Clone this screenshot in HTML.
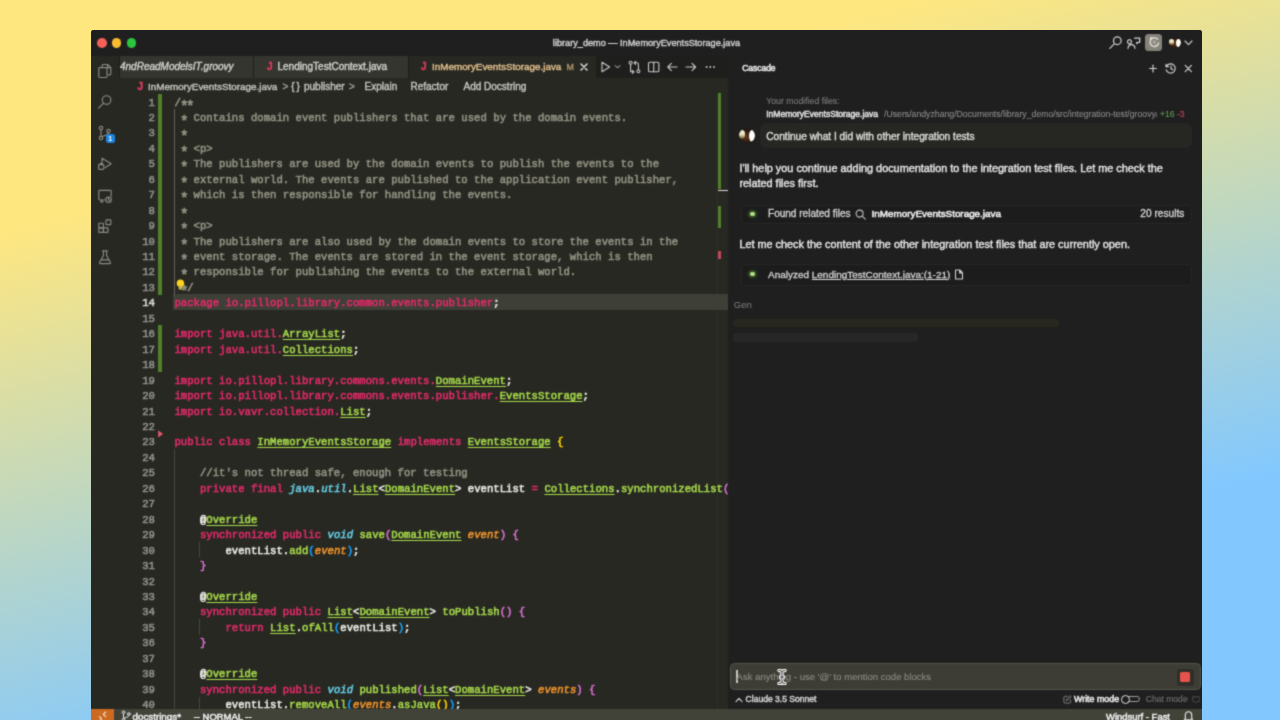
<!DOCTYPE html>
<html lang="en">
<head>
<meta charset="utf-8">
<title>library_demo — InMemoryEventsStorage.java</title>
<style>
*{box-sizing:border-box;margin:0;padding:0}
html,body{width:1280px;height:720px;overflow:hidden}
body{position:relative;background:linear-gradient(165.8deg,#FFE77F 22%,#82C8FF 76.5%);font-family:"Liberation Sans",sans-serif;color:#ccc;-webkit-font-smoothing:antialiased}
.abs{position:absolute}
#win{position:absolute;left:91px;top:30px;width:1111px;height:700px;background:#1f1f1f;border-radius:3px 3px 0 0;overflow:hidden;filter:url(#soft)}
/* all children of #win are positioned in window coords (page x-91, page y-30) */
#titlebar{position:absolute;left:0;top:0;width:1111px;height:26px;background:#1f1f1f}
.tl{position:absolute;top:7.9px;width:9.7px;height:9.7px;border-radius:50%}
#title{position:absolute;left:0;width:1111px;top:6.5px;text-align:center;font-size:9.17px;line-height:13px;color:#cfcfcf;-webkit-text-stroke:0.4px}
#activity{position:absolute;left:0;top:26px;width:28px;height:653px;background:#272822}
#tabs{position:absolute;left:28px;top:26px;width:609px;height:21.5px;background:#1e1f1c}
.tab{position:absolute;top:0;height:21.5px;background:#34352f;font-size:10px;line-height:22px;color:#d0d0cc;white-space:nowrap;-webkit-text-stroke:0.4px}
#editor{position:absolute;left:28px;top:47.5px;width:609px;height:631.5px;background:#272822;overflow:hidden}
#cascade{position:absolute;left:637px;top:26px;width:474px;height:653px;background:#1f1f1f;overflow:hidden}
#status{position:absolute;left:0;top:679px;width:1111px;height:21px;background:#414339;font-size:9.3px;color:#fff}

/* editor */
#bc{position:absolute;left:0;top:0;width:609px;height:16px;font-size:10px;line-height:17.5px;color:#c4c4bf;white-space:nowrap;-webkit-text-stroke:0.4px}
#bc span{position:absolute;top:0}
.jicon{color:#dc3c5e;font-weight:bold;font-family:"Liberation Sans",sans-serif}
#code{position:absolute;z-index:0;left:0;top:16px;width:609px;font-family:"Liberation Mono",monospace;font-size:10.64px;line-height:15.465px;color:#ecece6;font-weight:normal;-webkit-text-stroke:0.55px}
.ln{position:relative;height:15.465px;line-height:18.1px;padding-left:55.45px;white-space:pre;overflow:hidden}
.ln b{position:absolute;left:0;top:0;width:36px;text-align:right;color:#90908a;font-weight:normal}
.ln.cur{background:linear-gradient(90deg,transparent 54.5px,#3e3f36 54.5px)}
.ln.cur b{color:#d8d8d2}
.c{color:#929283}.k{color:#e22a6a}.t{color:#a6d94a;text-decoration:underline;text-underline-offset:1.5px;text-decoration-thickness:1px}
.f{color:#a6d94a}.i{color:#66d0e8;font-style:italic}.p{color:#f0942c;font-style:italic}
.a{display:inline-block;width:6.385px;transform:translateY(3.7px) scale(1.35)}
.b1{color:#ffd700}.b2{color:#da70d6}.b3{color:#179fff}
.gbar{position:absolute;left:39.2px;width:3.5px;background:#52802a}
.guide{position:absolute;width:1px;background:#464741}

/* tabs */
.tab i{font-style:italic}
.tab .jicon{position:absolute;top:0}
.tab .nm{position:absolute;top:0}
.tabact{position:absolute;top:0;height:21.5px}
.ico{position:absolute;fill:none;stroke:#c8c8c8;stroke-width:1.1;stroke-linecap:round;stroke-linejoin:round}
.aico{position:absolute;left:6px;fill:none;stroke:#8a8a85;stroke-width:1.15;stroke-linecap:round;stroke-linejoin:round}

/* cascade */
#cascade{font-size:10px;color:#d6d6d6;white-space:nowrap;-webkit-text-stroke:0.3px}
#cascade .tx{position:absolute;white-space:nowrap}
.main{font-size:10.87px;line-height:15px;color:#e4e4e4;-webkit-text-stroke:0.42px}
.row{position:absolute;left:13px;width:451px;height:19px;border:1px solid #262626;border-radius:4px;background:#1c1c1c}
.dot{position:absolute;left:8px;top:5.6px;width:4.6px;height:4.6px;border-radius:50%;background:#b4dc8c;box-shadow:0 0 2.5px 1.6px rgba(80,140,45,.6)}
.sk{position:absolute;left:5px;height:8px;border-radius:2px}

/* status */
#status .st{position:absolute;top:0.5px;line-height:13px;font-size:9.45px;white-space:nowrap;color:#f0f0f0;-webkit-text-stroke:0.5px}

.av{position:absolute;border-radius:50%;overflow:hidden;background:radial-gradient(ellipse at 46% 58%,#54301a 0 14%,#2a1b13 45%,#171310 100%)}
.av i{position:absolute;border-radius:50%}
.av .l{left:3%;top:12%;width:38%;height:62%;background:linear-gradient(180deg,#efe8cc 0 45%,#b8ab78 70%,rgba(110,100,55,.6) 100%)}
.av .r{right:2%;top:12%;width:38%;height:80%;background:radial-gradient(ellipse at 50% 45%,#fffffa 0 50%,#ece6d6 80%,rgba(210,200,180,.7) 100%)}
</style>
</head>
<body>
<svg width="0" height="0" style="position:absolute" aria-hidden="true"><defs>
<filter id="soft" x="0" y="0" width="100%" height="100%" color-interpolation-filters="sRGB">
<feConvolveMatrix order="3" divisor="1" edgeMode="duplicate" preserveAlpha="true" kernelMatrix="0.0311 0.1141 0.0311 0.1141 0.4191 0.1141 0.0311 0.1141 0.0311"/>
</filter></defs></svg>
<div id="win">
  <div id="titlebar">
    <div class="tl" style="left:6.1px;background:#f6605a"></div>
    <div class="tl" style="left:20.8px;background:#f9bc30"></div>
    <div class="tl" style="left:35.7px;background:#2bc540"></div>
    <div id="title">library_demo — InMemoryEventsStorage.java</div>
    <svg class="ico" style="left:1016px;top:4px;stroke:#cfcfcf;stroke-width:1.25" width="90" height="18" viewBox="0 0 90 18">
      <circle cx="10.3" cy="6.700" r="3.800"/><path d="M7.500 9.600l-4.700 4.800"/>
      <path d="M24.500 7.800a2 2 0 1 1 0-.1M21 14.300c.3-2.700 1.500-3.800 3.500-3.800s3.200 1.100 3.500 3.800M27.500 4h5.200v4.300h-1.700l-1.200 1.400v-1.400"/>
    </svg>
    <div class="abs" style="left:1054px;top:3.700px;width:17px;height:17px;border-radius:3.500px;background:#85837a"></div>
    <svg class="ico" style="left:1055.500px;top:5.200px;stroke:#dcdad2;stroke-width:1.500" width="14" height="14" viewBox="0 0 14 14"><path d="M10.600 4.300a4.300 4.300 0 1 0 1 3.700M4.500 2.500l-1.300 1.300"/><circle cx="7.300" cy="7" r="1.800" fill="#a9a79e" stroke="none"/></svg>
    <div class="av" style="left:1077.4px;top:7.4px;width:13px;height:10.8px"><i class="l"></i><i class="r"></i></div>
    <svg class="ico" style="left:1093px;top:10px;stroke:#c8c8c8;stroke-width:1.200" width="9" height="6" viewBox="0 0 9 6"><path d="M1 1l3.500 3.600 3.500-3.600"/></svg>
  </div>
  <div id="activity">
    <svg class="aico" style="top:6.5px" width="16" height="16" viewBox="0 0 16 16"><path d="M5.2 3.6V2.4a.9.9 0 0 1 .9-.9h4.6l3.1 3.1v6.3a.9.9 0 0 1-.9.9h-1.6"/><path d="M10.5 1.6v3h3.2"/><rect x="1.8" y="4.6" width="8.2" height="9.9" rx=".9"/></svg>
    <svg class="aico" style="top:38px" width="16" height="16" viewBox="0 0 16 16"><circle cx="9.6" cy="6" r="4.3"/><path d="M6.5 9.2L1.6 14.2"/></svg>
    <svg class="aico" style="top:69px" width="16" height="16" viewBox="0 0 16 16"><circle cx="4" cy="3" r="1.7"/><circle cx="4" cy="13" r="1.7"/><circle cx="11.5" cy="6" r="1.7"/><path d="M4 4.7v6.6M11.5 7.7c0 2.6-3.2 2.4-6.3 4"/></svg>
    <div class="abs" style="left:14.7px;top:78px;width:9px;height:9px;border-radius:2.5px;background:#1a85e0;color:#fff;font-size:7px;line-height:9px;text-align:center;font-weight:bold">1</div>
    <svg class="aico" style="top:100px" width="16" height="16" viewBox="0 0 16 16"><path d="M5 2.2l9.2 5.6-6.2 4M5 2.2v5.3"/><rect x="1.6" y="8.6" width="5.2" height="4.8" rx=".8"/><path d="M3 8.6V7.5h2.4v1.1"/></svg>
    <svg class="aico" style="top:131.5px" width="16" height="16" viewBox="0 0 16 16"><path d="M8 12H2.7a.9.9 0 0 1-.9-.9V3.2a.9.9 0 0 1 .9-.9h10.6a.9.9 0 0 1 .9.9v5"/><path d="M4.6 12v1.6M3.6 13.8h2.6"/><circle cx="11.6" cy="11.8" r="2.7"/><path d="M11.6 10.4v1.6l1 .6"/></svg>
    <svg class="aico" style="top:161.5px" width="16" height="16" viewBox="0 0 16 16"><rect x="1.8" y="5.2" width="4.6" height="4.6" rx=".5"/><rect x="1.8" y="9.8" width="4.6" height="4.6" rx=".5"/><rect x="6.4" y="9.8" width="4.6" height="4.6" rx=".5"/><rect x="9" y="1.8" width="4.8" height="4.8" rx=".7"/></svg>
    <svg class="aico" style="top:193px" width="16" height="16" viewBox="0 0 16 16"><path d="M5.6 1.8h4.8M6.4 1.8v4.6L2.6 13.4a.8.8 0 0 0 .7 1.2h9.4a.8.8 0 0 0 .7-1.2L9.6 6.4V1.8M4.2 10.8h7.6"/></svg>
  </div>
  <div id="tabs">
    <div class="tab" style="left:0.5px;width:133.5px;overflow:hidden"><span class="nm" style="left:0.5px;font-style:italic">4ndReadModelsIT.groovy</span></div>
    <div class="tab" style="left:135px;width:153.5px"><span class="jicon" style="left:13px">J</span><span class="nm" style="left:23.5px">LendingTestContext.java</span></div>
    <div class="tab" style="left:289.5px;width:187px;background:#272822;color:#e2c08d"><span class="jicon" style="left:12.5px">J</span><span class="nm" style="left:23.5px;font-size:9.87px">InMemoryEventsStorage.java</span><span class="nm" style="left:158px;font-size:8.800px;color:#ad9468">M</span><svg class="ico" style="left:171px;top:6.5px;stroke:#e6e6e6;stroke-width:1.4" width="8" height="8" viewBox="0 0 8 8"><path d="M1 1l6 6M7 1l-6 6"/></svg></div>
    <svg class="ico" style="left:481px;top:4px" width="118" height="14" viewBox="0 0 118 14">
      <path d="M2 2.2v9.6l7.6-4.8z"/>
      <path d="M15.3 5.6l2.3 2.4 2.3-2.4" stroke-width="1"/>
      <circle cx="30.6" cy="2.8" r="1.5"/><circle cx="38.4" cy="11.2" r="1.5"/>
      <path d="M30.6 4.3v7.5M38.4 9.7v-5.2a1.7 1.7 0 0 0-1.7-1.7h-2.6M35.6 1.3l-1.6 1.5 1.6 1.5M30.6 11.8h3.2M32.4 10.3l1.6 1.5-1.6 1.5"/>
      <rect x="48.5" y="2.2" width="10.4" height="9.6" rx="1.3"/><path d="M53.7 2.2v9.6"/>
      <path d="M77 7h-9.2M71.4 3.4l-3.6 3.6 3.6 3.6"/>
      <path d="M86 7h9.6M92 3.4l3.6 3.6-3.6 3.6"/>
      <g fill="#c8c8c8" stroke="none"><circle cx="110.3" cy="7" r="0.95"/><circle cx="114" cy="7" r="0.95"/><circle cx="106.600" cy="7" r="0.95"/></g>
    </svg>
  </div>
  <div id="editor">
    <div id="bc">
      <span class="jicon" style="left:18.5px">J</span>
      <span style="left:29px;font-size:9.87px">InMemoryEventsStorage.java</span>
      <span style="left:163.5px;color:#a0a09a">&gt;</span>
      <span style="left:172px;letter-spacing:2px;font-size:10.5px">{}</span>
      <span style="left:185px">publisher</span>
      <span style="left:230px;color:#a0a09a">&gt;</span>
      <span style="left:245.5px">Explain</span>
      <span style="left:291.5px">Refactor</span>
      <span style="left:344.5px">Add Docstring</span>
    </div>
    <div id="code">
<div class="ln"><b>1</b><span class="c">/<span class="a">*</span><span class="a">*</span></span></div>
<div class="ln"><b>2</b><span class="c"> <span class="a">*</span> Contains domain event publishers that are used by the domain events.</span></div>
<div class="ln"><b>3</b><span class="c"> <span class="a">*</span></span></div>
<div class="ln"><b>4</b><span class="c"> <span class="a">*</span> &lt;p&gt;</span></div>
<div class="ln"><b>5</b><span class="c"> <span class="a">*</span> The publishers are used by the domain events to publish the events to the</span></div>
<div class="ln"><b>6</b><span class="c"> <span class="a">*</span> external world. The events are published to the application event publisher,</span></div>
<div class="ln"><b>7</b><span class="c"> <span class="a">*</span> which is then responsible for handling the events.</span></div>
<div class="ln"><b>8</b><span class="c"> <span class="a">*</span></span></div>
<div class="ln"><b>9</b><span class="c"> <span class="a">*</span> &lt;p&gt;</span></div>
<div class="ln"><b>10</b><span class="c"> <span class="a">*</span> The publishers are also used by the domain events to store the events in the</span></div>
<div class="ln"><b>11</b><span class="c"> <span class="a">*</span> event storage. The events are stored in the event storage, which is then</span></div>
<div class="ln"><b>12</b><span class="c"> <span class="a">*</span> responsible for publishing the events to the external world.</span></div>
<div class="ln"><b>13</b><span class="c"> <span class="a">*</span>/</span></div>
<div class="ln cur"><b>14</b><span class="k">package io.pillopl.library.common.events.publisher</span>;</div>
<div class="ln"><b>15</b></div>
<div class="ln"><b>16</b><span class="k">import java.util.</span><span class="t">ArrayList</span>;</div>
<div class="ln"><b>17</b><span class="k">import java.util.</span><span class="t">Collections</span>;</div>
<div class="ln"><b>18</b></div>
<div class="ln"><b>19</b><span class="k">import io.pillopl.library.commons.events.</span><span class="t">DomainEvent</span>;</div>
<div class="ln"><b>20</b><span class="k">import io.pillopl.library.commons.events.publisher.</span><span class="t">EventsStorage</span>;</div>
<div class="ln"><b>21</b><span class="k">import io.vavr.collection.</span><span class="t">List</span>;</div>
<div class="ln"><b>22</b></div>
<div class="ln"><b>23</b><span class="k">public class</span> <span class="t">InMemoryEventsStorage</span> <span class="k">implements</span> <span class="t">EventsStorage</span> <span class="b1">{</span></div>
<div class="ln"><b>24</b></div>
<div class="ln"><b>25</b><span class="c">    //it's not thread safe, enough for testing</span></div>
<div class="ln"><b>26</b>    <span class="k">private final</span> <span class="i">java</span>.<span class="i">util</span>.<span class="t">List</span>&lt;<span class="t">DomainEvent</span>&gt; eventList <span class="k">=</span> <span class="t">Collections</span>.<span class="f">synchronizedList</span><span class="b2">(</span><span class="k">new</span> <span class="t">ArrayList</span>&lt;&gt;<span class="b3">()</span><span class="b2">)</span>;</div>
<div class="ln"><b>27</b></div>
<div class="ln"><b>28</b>    @<span class="t">Override</span></div>
<div class="ln"><b>29</b>    <span class="k">synchronized public</span> <span class="i">void</span> <span class="f">save</span><span class="b2">(</span><span class="t">DomainEvent</span> <span class="p">event</span><span class="b2">)</span> <span class="b2">{</span></div>
<div class="ln"><b>30</b>        eventList.<span class="f">add</span><span class="b3">(</span><span class="p">event</span><span class="b3">)</span>;</div>
<div class="ln"><b>31</b>    <span class="b2">}</span></div>
<div class="ln"><b>32</b></div>
<div class="ln"><b>33</b>    @<span class="t">Override</span></div>
<div class="ln"><b>34</b>    <span class="k">synchronized public</span> <span class="t">List</span>&lt;<span class="t">DomainEvent</span>&gt; <span class="f">toPublish</span><span class="b2">()</span> <span class="b2">{</span></div>
<div class="ln"><b>35</b>        <span class="k">return</span> <span class="t">List</span>.<span class="f">ofAll</span><span class="b3">(</span>eventList<span class="b3">)</span>;</div>
<div class="ln"><b>36</b>    <span class="b2">}</span></div>
<div class="ln"><b>37</b></div>
<div class="ln"><b>38</b>    @<span class="t">Override</span></div>
<div class="ln"><b>39</b>    <span class="k">synchronized public</span> <span class="i">void</span> <span class="f">published</span><span class="b2">(</span><span class="t">List</span>&lt;<span class="t">DomainEvent</span>&gt; <span class="p">events</span><span class="b2">)</span> <span class="b2">{</span></div>
<div class="ln"><b>40</b>        eventList.<span class="f">removeAll</span><span class="b3">(</span><span class="p">events</span>.<span class="f">asJava</span><span class="b1">()</span><span class="b3">)</span>;</div>
<div class="ln"><b>41</b>    <span class="b2">}</span></div>
<div class="abs" style="left:597.5px;top:0;width:1.2px;height:632px;background:#2e2f29;z-index:-1"></div>
<div class="abs" style="left:598.5px;top:-0.2px;width:3.6px;height:95.7px;background:#52802a"></div>
<div class="abs" style="left:598.5px;top:96px;width:10.5px;height:1.6px;background:#d8d8d8"></div>
<div class="abs" style="left:598.5px;top:112px;width:3.6px;height:22.3px;background:#52802a"></div>
<div class="abs" style="left:598.5px;top:157.2px;width:3.8px;height:8.2px;background:#c04a58"></div>
<svg class="abs" style="left:57px;top:185.28px" width="9" height="12" viewBox="0 0 9 12"><circle cx="4.400" cy="4.200" r="3.700" fill="#ffd21e"/><path d="M2.600 6.800h3.600v2.900a.9.900 0 0 1-.9.900h-1.800a.9.900 0 0 1-.9-.9z" fill="#c8b44a"/></svg>
<svg class="abs" style="left:39px;top:336.23px" width="6" height="8" viewBox="0 0 6 8"><path d="M.2.300l4.800 3.600-4.800 3.600z" fill="#e0586e"/></svg>
<div class="gbar" style="top:0;height:201.04px"></div>
<div class="gbar" style="top:231.97px;height:46.39px"></div>
<div class="guide" style="left:54.9px;top:15.46px;height:185.58px;background:#62635c;width:1.5px"></div>
<div class="guide" style="left:54.9px;top:355.69px;height:280px"></div>
<div class="guide" style="left:80.4px;top:448.49px;height:15.465px"></div>
<div class="guide" style="left:80.4px;top:525.81px;height:15.465px"></div>
<div class="guide" style="left:80.4px;top:603.13px;height:15.465px"></div>
    </div>
  </div>
  <div id="cascade"><div id="cin" style="position:absolute;left:0;top:-26px;width:474px;height:679px">
    <div class="tx" style="left:14.2px;top:32px;font-size:8.46px;line-height:12px;color:#e2e2e2;-webkit-text-stroke:0.6px">Cascade</div>
    <svg class="ico" style="left:419px;top:32px;stroke:#d0d0d0;stroke-width:1.2" width="50" height="13" viewBox="0 0 50 13">
      <path d="M6 3.1v6.800M2.600 6.500h6.800"/>
      <path d="M19.6 4.2a4.6 4.6 0 1 1-.4 3.6M19 2.4v2.3h2.3M24 4v2.7l1.8 1"/>
      <path d="M38.2 3.4l6.200 6.200M44.400 3.400l-6.200 6.200"/>
    </svg>
    <div class="tx" style="left:38.2px;top:64.5px;font-size:8.74px;line-height:12px;color:#777;-webkit-text-stroke:0.15px">Your modified files:</div>
    <div class="tx" style="left:38.2px;top:77.5px;font-size:8.54px;line-height:12px;color:#e0e0e0;-webkit-text-stroke:0.5px">InMemoryEventsStorage.java</div>
    <div class="tx" style="left:156px;top:77.5px;width:272.5px;overflow:hidden;font-size:8.71px;line-height:12px;color:#8a8a8a;-webkit-text-stroke:0.1px">/Users/andyzhang/Documents/library_demo/src/integration-test/groovy/io/pillopl/library</div>
    <div class="tx" style="left:432px;top:77.5px;font-size:8.6px;line-height:12px;color:#5f9e55;-webkit-text-stroke:0.1px">+16</div>
    <div class="tx" style="left:449px;top:77.5px;font-size:8.6px;line-height:12px;color:#c2445c;-webkit-text-stroke:0.1px">-3</div>
    <div class="abs" style="left:31.7px;top:93.4px;width:432.3px;height:24.4px;border-radius:6px;background:#262622"></div>
    <div class="tx" style="left:38.2px;top:99.5px;font-size:10.17px;line-height:13px;color:#dcdcdc;-webkit-text-stroke:0.4px">Continue what I did with other integration tests</div>
    <div class="av" style="left:10.9px;top:98.4px;width:16px;height:14.6px"><i class="l"></i><i class="r"></i></div>
    <div class="tx main" style="left:11.4px;top:130.7px">I'll help you continue adding documentation to the integration test files. Let me check the<br>related files first.</div>
    <div class="row" style="top:175px"><div class="dot"></div>
      <div class="tx" style="left:26px;top:1.2px;line-height:13px;font-size:10.04px">Found related files</div>
      <svg class="ico" style="left:112.5px;top:3px;stroke:#c0c0c0" width="11" height="11" viewBox="0 0 11 11"><circle cx="4.6" cy="4.6" r="3.5"/><path d="M7.2 7.2l3 3"/></svg>
      <div class="tx" style="left:129.6px;top:1px;line-height:13px;font-size:9.87px;color:#f0f0f0;-webkit-text-stroke:0.55px">InMemoryEventsStorage.java</div>
      <div class="tx" style="left:398.3px;top:1.2px;line-height:13px;font-size:10.17px">20 results</div>
    </div>
    <div class="tx main" style="left:11.4px;top:206.7px">Let me check the content of the other integration test files that are currently open.</div>
    <div class="row" style="top:234px;height:21.6px"><div class="dot" style="top:6.8px"></div>
      <div class="tx" style="left:26px;top:2.6px;line-height:13px;font-size:9.97px">Analyzed <span style="text-decoration:underline;text-underline-offset:1px">LendingTestContext.java:(1-21)</span></div>
      <svg class="ico" style="left:212px;top:3.8px;stroke:#d0d0d0" width="10" height="11" viewBox="0 0 10 11"><path d="M1.5 1h4.3l2.7 2.7v6.3h-7zM5.6 1.2v2.7h2.7"/></svg>
    </div>
    <div class="tx" style="left:5.8px;top:268px;font-size:9.52px;line-height:13px;color:#7a7a7a;-webkit-text-stroke:0.1px">Gen</div>
    <div class="sk" style="top:289px;width:325.7px;background:#27271f"></div>
    <div class="sk" style="top:303px;width:185px;background:#272727;height:8.5px"></div>
    <div class="abs" style="left:1.6px;top:633.2px;width:471px;height:27.2px;border-radius:4.5px;background:#3d3d35;border:1px solid #55554c"></div>
    <div class="abs" style="left:8px;top:640px;width:1.6px;height:13px;background:#c6c6be"></div>
    <div class="tx" style="left:8.6px;top:640.1px;font-size:9.54px;line-height:13px;color:#8c8c84;-webkit-text-stroke:0.1px">Ask anything - use '@' to mention code blocks</div>
    <svg class="abs" style="left:48.5px;top:639px" width="10" height="16" viewBox="0 0 10 16"><path d="M2 1.5c1.6 0 3 .4 3 1.6 0-1.2 1.4-1.6 3-1.6M2 14.500c1.600 0 3-.4 3-1.6 0 1.200 1.400 1.600 3 1.600M5 3.100v9.800M3.300 8h3.400" fill="none" stroke="#fff" stroke-width="3.3" stroke-linecap="round"/><path d="M2 1.500c1.600 0 3 .4 3 1.600 0-1.200 1.400-1.600 3-1.600M2 14.500c1.600 0 3-.4 3-1.600 0 1.200 1.400 1.600 3 1.600M5 3.100v9.800M3.300 8h3.400" fill="none" stroke="#222" stroke-width="0.9" stroke-linecap="round"/></svg>
    <div class="abs" style="left:448.5px;top:638.5px;width:17.5px;height:17.5px;border-radius:3px;background:#2f2f29"></div>
    <div class="abs" style="left:452.3px;top:642px;width:10px;height:10px;border-radius:1.5px;background:#e8524c"></div>
    <svg class="ico" style="left:7.3px;top:666.5px;stroke:#c8c8c8;stroke-width:1.2" width="8" height="6" viewBox="0 0 8 6"><path d="M1 4.6l3-3.200 3 3.200"/></svg>
    <div class="tx" style="left:17.600px;top:663px;font-size:8.56px;line-height:12px;color:#d4d4d4;-webkit-text-stroke:0.45px">Claude 3.5 Sonnet</div>
    <svg class="ico" style="left:334.500px;top:665px;stroke:#7c7c7c;stroke-width:1.100" width="9" height="9" viewBox="0 0 10 10"><path d="M4.500 1.500h-2.500a1 1 0 0 0-1 1v5.500a1 1 0 0 0 1 1h5.500a1 1 0 0 0 1-1v-2.500M8 1l1 1-4 4-1.400.4.400-1.400z"/></svg>
    <div class="tx" style="left:346px;top:663px;font-size:8.85px;line-height:12px;color:#f0f0f0;-webkit-text-stroke:0.5px">Write mode</div>
    <div class="abs" style="left:398px;top:666.3px;width:14.3px;height:6px;border-radius:3px;border:1px solid #9a9a9a"></div>
    <div class="abs" style="left:392.800px;top:664.500px;width:9.600px;height:9.600px;border-radius:50%;border:1.500px solid #e4e4e4;background:#1f1f1f"></div>
    <div class="tx" style="left:417.700px;top:663px;font-size:8.59px;line-height:12px;color:#6e6e6e;-webkit-text-stroke:0.150px">Chat mode</div>
    <svg class="ico" style="left:463.800px;top:666.200px;stroke:#505050;stroke-width:1.100" width="8.500" height="7.650" viewBox="0 0 10 9"><path d="M1.500 1h7a.8.800 0 0 1 .8.800v3.900a.8.800 0 0 1-.8.800h-2.500l-1.500 1.700-1.500-1.700h-1.500a.8.800 0 0 1-.8-.8v-3.900a.8.800 0 0 1 .8-.8z"/></svg>
  </div></div>
  <div id="status">
    <div class="abs" style="left:0;top:0;width:22.500px;height:21px;background:#cc6a22"></div>
    <svg class="ico" style="left:5.500px;top:1.5px;stroke:#f4e6d8;stroke-width:1.100" width="11" height="11" viewBox="0 0 11 11"><path d="M2.400 5.600l2.300 2.300-2.300 2.300M8.600 1l-2.300 2.300 2.300 2.300"/></svg>
    <svg class="ico" style="left:29.500px;top:0.5px;stroke:#e8e8e8;stroke-width:1" width="10" height="12" viewBox="0 0 10 12"><circle cx="2.500" cy="2.200" r="1.300"/><circle cx="2.500" cy="9.800" r="1.300"/><circle cx="7.800" cy="4" r="1.300"/><path d="M2.500 3.500v5M7.800 5.300c0 2-2.600 1.800-5 3"/></svg>
    <div class="st" style="left:41.500px;font-size:9.8px">docstrings*</div>
    <div class="st" style="left:102.700px">-- NORMAL --</div>
    <div class="st" style="left:1015px">Windsurf - Fast</div>
    <svg class="ico" style="left:1092px;top:0.5px;stroke:#f0f0f0;stroke-width:1.100" width="11" height="12" viewBox="0 0 11 12"><path d="M2.300 8.500v-3.500a3.200 3.200 0 0 1 6.400 0v3.500l1 1.300h-8.400zM4.500 11.300h2"/></svg>
  </div>
</div>
</body>
</html>
